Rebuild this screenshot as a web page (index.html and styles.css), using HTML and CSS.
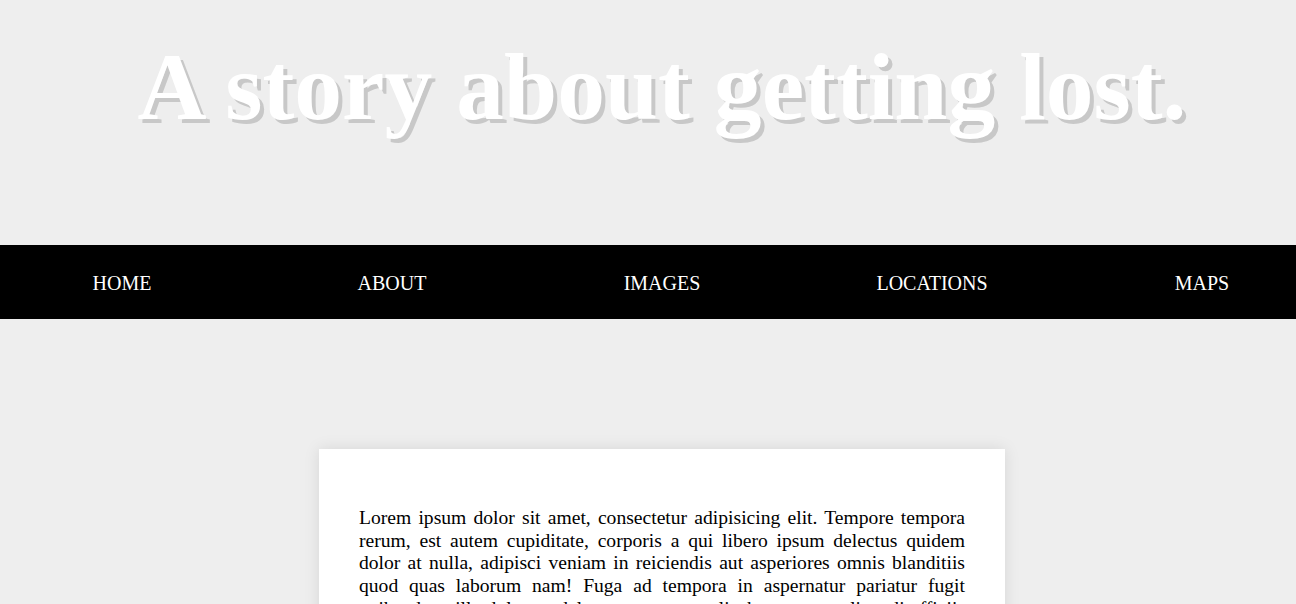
FILE: index.html
```html
<!DOCTYPE html>
<html lang="en">
<head>
<meta charset="utf-8">
<title>A story about getting lost.</title>
<link rel="stylesheet" href="styles.css">
</head>
<body>
  <header class="hero">
    <h1 class="hero-title">A story about getting lost.</h1>
  </header>
  <nav class="nav">
    <ul class="nav-list">
      <li class="nav-item"><a class="nav-link" href="#">HOME</a></li>
      <li class="nav-item"><a class="nav-link" href="#">ABOUT</a></li>
      <li class="nav-item"><a class="nav-link" href="#">IMAGES</a></li>
      <li class="nav-item"><a class="nav-link" href="#">LOCATIONS</a></li>
      <li class="nav-item"><a class="nav-link" href="#">MAPS</a></li>
    </ul>
  </nav>
  <main class="main">
    <article class="card">
      <p class="card-text">Lorem ipsum dolor sit amet, consectetur adipisicing elit. Tempore tempora rerum, est autem cupiditate, corporis a qui libero ipsum delectus quidem dolor at nulla, adipisci veniam in reiciendis aut asperiores omnis blanditiis quod quas laborum nam! Fuga ad tempora in aspernatur pariatur fugit quibusdam, illo dolorum delectus quaerat explicabo nostrum eligendi officiis nihil. Dolores placeat doloribus sapiente eaque voluptatibus minima ad laboriosam.</p>
    </article>
  </main>
</body>
</html>
```

FILE: styles.css
```css
html, body {
  margin: 0;
  padding: 0;
}

body {
  background: #eeeeee;
  font-family: "Liberation Serif", "Times New Roman", serif;
  color: #000;
  overflow: hidden;
}

.hero {
  height: 245px;
  box-sizing: border-box;
  padding: 32px 0 0 28px;
}

.hero-title {
  margin: 0;
  text-align: center;
  font-size: 95.6px;
  font-weight: bold;
  color: #ffffff;
  text-shadow: 4px 4px 0 #c8c8c8;
  line-height: normal;
}

.nav {
  background: #000;
}

.nav-list {
  list-style: none;
  margin: 0;
  padding: 27px 0 24px 28px;
  display: grid;
  grid-template-columns: repeat(5, 188px);
  column-gap: 82px;
}

.nav-item {
  text-align: center;
  font-size: 20px;
  line-height: 23px;
}

.nav-link {
  color: #ffffff;
  text-decoration: none;
}

.main {
  padding: 130px 0 0 28px;
}

.card {
  width: 686px;
  box-sizing: border-box;
  margin: 0 auto;
  background: #ffffff;
  padding: 40px;
  box-shadow: 0 0 15px rgba(0, 0, 0, 0.1);
}

.card-text {
  margin: 18px 0;
  font-size: 19.6px;
  line-height: 22.7px;
  text-align: justify;
}
```
